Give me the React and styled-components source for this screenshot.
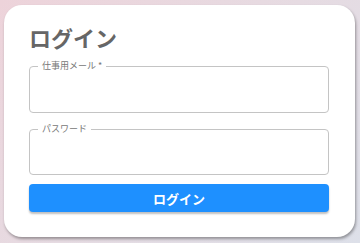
import React from "react";
import styled, { createGlobalStyle } from "styled-components";

const Global = createGlobalStyle`
  html, body {
    margin: 0;
    padding: 0;
  }
  body {
    font-family: "Noto Sans CJK JP", "Noto Sans", sans-serif;
  }
`;

const Page = styled.div`
  width: 360px;
  height: 243px;
  box-sizing: border-box;
  padding: 5px 5px 6px 4px;
  background: linear-gradient(135deg, #edd3da 0%, #e6dbe2 50%, #dde0e9 100%);
`;

const Card = styled.div`
  width: 351px;
  height: 232px;
  box-sizing: border-box;
  background: #fff;
  border-radius: 18px;
  box-shadow: 1px 2px 3px rgba(0, 0, 0, 0.35);
  padding: 19px 26px 0 25px;
  display: flex;
  flex-direction: column;
`;

const Title = styled.h1`
  margin: 0 0 16px 0;
  font-size: 22px;
  line-height: 26px;
  font-weight: 700;
  color: #666;
`;

const Field = styled.div`
  position: relative;
  height: ${(p) => p.h}px;
  box-sizing: border-box;
  border: 1px solid #c4c4c4;
  border-radius: 4px;
  margin-bottom: ${(p) => p.mb}px;
`;

const Label = styled.span`
  position: absolute;
  top: -7px;
  left: 8px;
  padding: 0 4px;
  background: #fff;
  font-size: 9px;
  line-height: 12px;
  color: #777;
`;

const Button = styled.button`
  height: 28px;
  border: none;
  border-radius: 4px;
  background: #1e90ff;
  color: #fff;
  font-family: "Noto Sans CJK JP", "Noto Sans", sans-serif;
  font-size: 13px;
  font-weight: 700;
  box-shadow: 0 2px 2px rgba(0, 0, 0, 0.25);
  cursor: pointer;
  padding: 0;
`;

export default function App() {
  return (
    <>
      <Global />
      <Page>
        <Card>
          <Title>ログイン</Title>
          <Field h={47} mb={16}>
            <Label>仕事用メール *</Label>
          </Field>
          <Field h={46} mb={9}>
            <Label>パスワード</Label>
          </Field>
          <Button>ログイン</Button>
        </Card>
      </Page>
    </>
  );
}
